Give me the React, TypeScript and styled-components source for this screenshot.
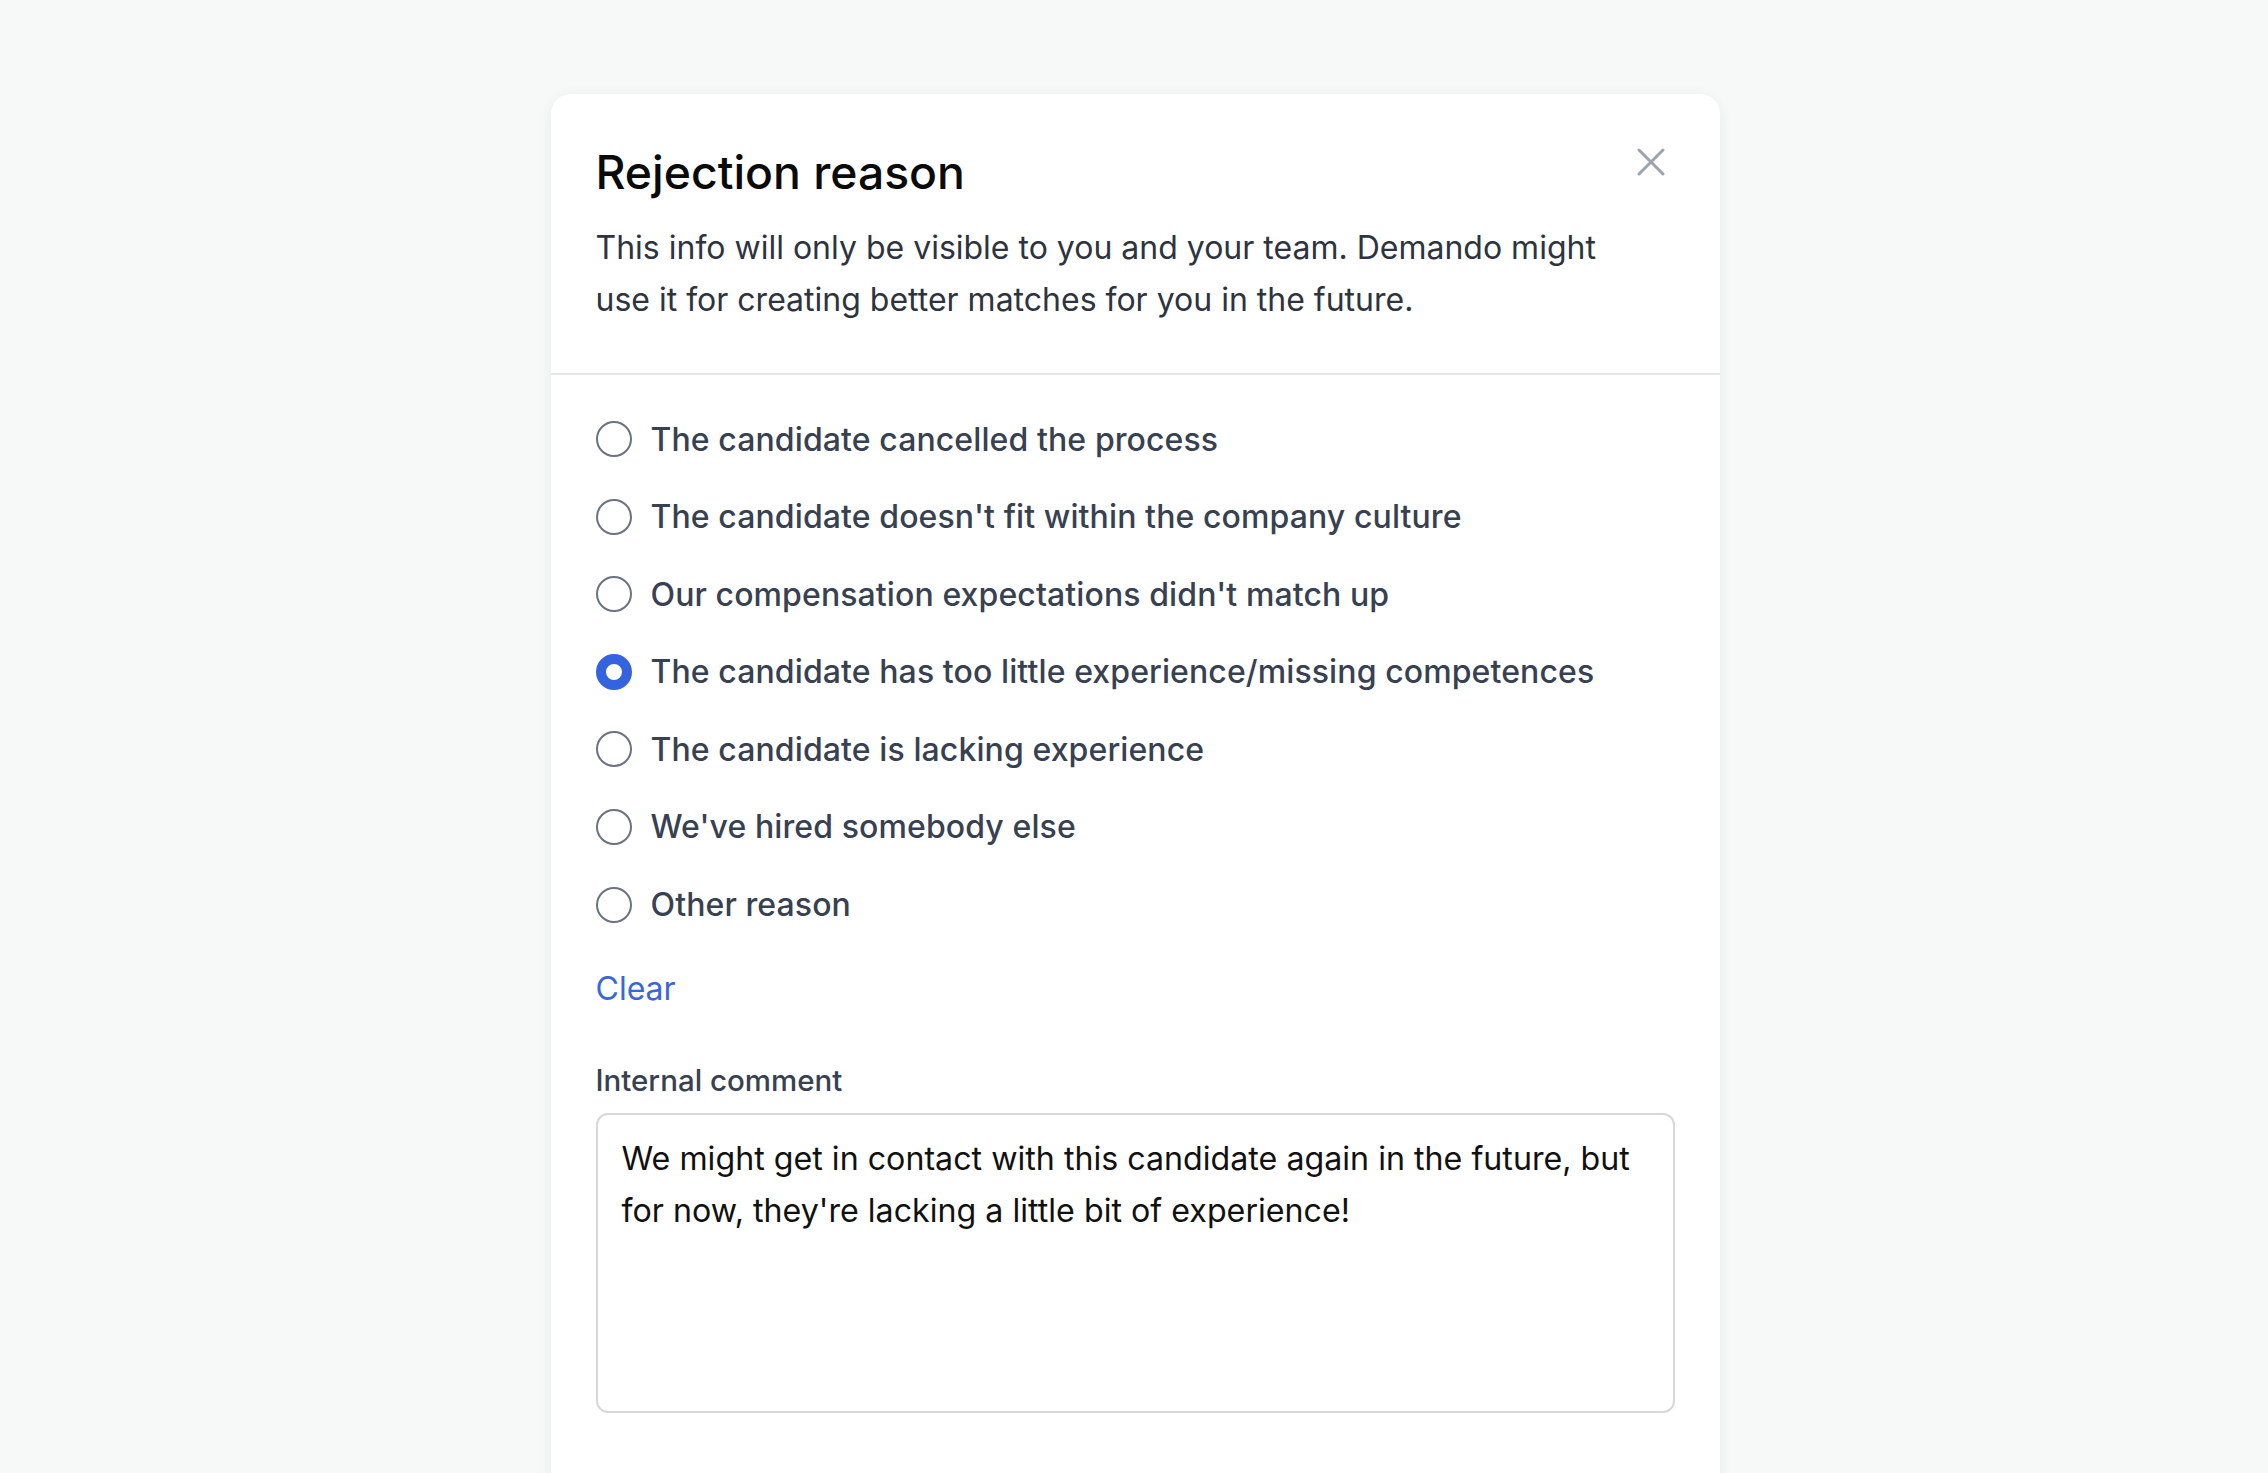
import React, { useState } from 'react';
import styled, { createGlobalStyle } from 'styled-components';

const reasons = [
  'The candidate cancelled the process',
  "The candidate doesn't fit within the company culture",
  "Our compensation expectations didn't match up",
  'The candidate has too little experience/missing competences',
  'The candidate is lacking experience',
  "We've hired somebody else",
  'Other reason',
];

const GlobalStyle = createGlobalStyle`
  html, body {
    margin: 0;
    padding: 0;
    height: 100%;
    overflow: hidden;
    background: #f7f8f8;
    font-family: Inter, 'Noto Sans', sans-serif;
  }
`;

const Page = styled.div`
  display: flex;
  justify-content: center;
  padding-top: 94px;
  height: 1473px;
  box-sizing: border-box;
`;

const Card = styled.div`
  width: 1169px;
  margin-left: 2px;
  background: #ffffff;
  border-radius: 20px;
  box-shadow: 0 2px 14px rgba(17, 24, 39, 0.06);
  display: flex;
  flex-direction: column;
  min-height: 1500px;
`;

const Header = styled.div`
  position: relative;
  padding: 50px 45px 47px;
  border-bottom: 2px solid #e5e7eb;
`;

const Title = styled.h2`
  margin: 0;
  font-size: 46.3px;
  line-height: 56px;
  font-weight: 500;
  color: #0a0a0a;
`;

const Description = styled.p`
  margin: 22px 0 0;
  max-width: 1040px;
  font-size: 32px;
  line-height: 52px;
  color: #2d3440;
`;

const CloseButton = styled.button`
  position: absolute;
  top: 52px;
  right: 53px;
  width: 32px;
  height: 32px;
  padding: 0;
  border: none;
  background: none;
  cursor: pointer;
  display: flex;
  align-items: center;
  justify-content: center;
`;

const Body = styled.div`
  padding: 40px 45px 0;
  display: flex;
  flex-direction: column;
`;

const OptionList = styled.div`
  display: flex;
  flex-direction: column;
  gap: 29.6px;
`;

const Option = styled.label`
  display: flex;
  align-items: center;
  gap: 19px;
  height: 48px;
  cursor: pointer;
  font-size: 32px;
  font-weight: 500;
  color: #374151;
  letter-spacing: 0.1px;
`;

const Radio = styled.span<{ $checked: boolean }>`
  width: 36px;
  height: 36px;
  flex: none;
  box-sizing: border-box;
  border-radius: 50%;
  border: ${(p) => (p.$checked ? '10.5px solid #3563e0' : '2px solid #6b7280')};
  background: #ffffff;
`;

const ClearLink = styled.button`
  align-self: flex-start;
  margin-top: 36px;
  padding: 0;
  border: none;
  background: none;
  font-family: inherit;
  font-size: 32px;
  line-height: 48px;
  color: #3a66d8;
  cursor: pointer;
`;

const FieldLabel = styled.div`
  margin-top: 47px;
  font-size: 29.5px;
  line-height: 40px;
  font-weight: 500;
  color: #374151;
`;

const Comment = styled.textarea`
  margin-top: 13px;
  height: 300px;
  box-sizing: border-box;
  padding: 18px 24px;
  border: 2px solid #d6d8dc;
  border-radius: 12px;
  resize: none;
  font-family: inherit;
  font-size: 32.2px;
  line-height: 52px;
  color: #111111;
  outline: none;
`;

export default function App() {
  const [selected, setSelected] = useState<number | null>(3);

  return (
    <>
      <GlobalStyle />
      <Page>
        <Card>
          <Header>
            <Title>Rejection reason</Title>
            <Description>
              This info will only be visible to you and your team. Demando might use it for
              creating better matches for you in the future.
            </Description>
            <CloseButton aria-label="Close">
              <svg width="28" height="28" viewBox="0 0 28 28" fill="none">
                <path
                  d="M2 2L26 26M26 2L2 26"
                  stroke="#9ca3af"
                  strokeWidth="3"
                  strokeLinecap="round"
                />
              </svg>
            </CloseButton>
          </Header>
          <Body>
            <OptionList>
              {reasons.map((r, i) => (
                <Option key={r} onClick={() => setSelected(i)}>
                  <Radio $checked={selected === i} />
                  {r}
                </Option>
              ))}
            </OptionList>
            <ClearLink onClick={() => setSelected(null)}>Clear</ClearLink>
            <FieldLabel>Internal comment</FieldLabel>
            <Comment
              defaultValue={
                "We might get in contact with this candidate again in the future, but for now, they're lacking a little bit of experience!"
              }
            />
          </Body>
        </Card>
      </Page>
    </>
  );
}
